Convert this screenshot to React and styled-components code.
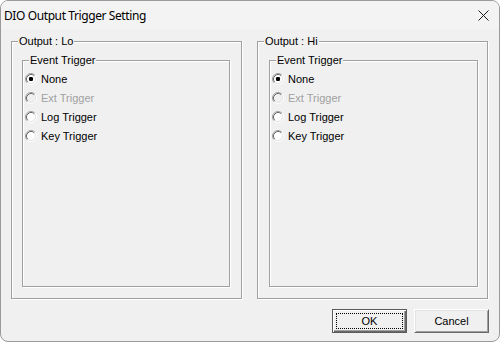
import React from "react";
import styled, { createGlobalStyle } from "styled-components";

const GlobalStyle = createGlobalStyle`
  html, body {
    margin: 0;
    padding: 0;
    background: #ffffff;
  }
  body {
    font-family: "Liberation Sans", Arial, sans-serif;
    font-size: 11px;
    color: #000;
  }
`;

const Window = styled.div`
  width: 500px;
  height: 342px;
  box-sizing: border-box;
  background: #f0f0f0;
  border: 1px solid #9a9a9a;
  border-radius: 8px;
  display: flex;
  flex-direction: column;
  overflow: hidden;
`;

const TitleBar = styled.div`
  height: 28px;
  display: flex;
  align-items: center;
  justify-content: space-between;
  padding: 0 10px 0 3px;
  background: #f3f3f3;
`;

const Title = styled.span`
  font-family: "Noto Sans", "Open Sans", sans-serif;
  font-size: 12px;
  color: #000;
  letter-spacing: -0.4px;
`;

const CloseButton = styled.span`
  width: 12px;
  height: 12px;
  display: flex;
  align-items: center;
  justify-content: center;
`;

const Body = styled.div`
  flex: 1;
  display: flex;
  flex-direction: column;
  padding: 12px 10px 0 10px;
`;

const Groups = styled.div`
  display: grid;
  grid-template-columns: 231px 231px;
  column-gap: 15px;
`;

const GroupBox = styled.div`
  box-sizing: border-box;
  height: ${(p) => (p.$height ? `${p.$height}px` : "auto")};
  flex: ${(p) => (p.$height ? "none" : "1")};
  border: 1px solid #a0a0a0;
  box-shadow: inset 1px 1px 0 #fff, 1px 1px 0 #fff;
  display: flex;
  flex-direction: column;
`;

const GroupTitle = styled.span`
  display: block;
  width: fit-content;
  margin: -7px 0 0 6px;
  padding: 0 1px;
  line-height: 13px;
  background: #f0f0f0;
  white-space: nowrap;
`;

const Inner = styled.div`
  flex: 1;
  display: flex;
  margin: 12px ${(p) => p.$right}px 11px ${(p) => p.$left}px;
`;

const RadioList = styled.div`
  display: flex;
  flex-direction: column;
  padding: 2px 0 0 2px;
`;

const RadioRow = styled.label`
  height: 19px;
  display: flex;
  align-items: center;
  gap: 4px;
  color: ${(p) => (p.$disabled ? "#a0a0a0" : "#000")};
  white-space: nowrap;
`;

const ButtonRow = styled.div`
  display: flex;
  justify-content: flex-end;
  gap: 7px;
  margin-top: 10px;
`;

const Button = styled.button`
  width: 75px;
  height: 24px;
  box-sizing: border-box;
  padding: 0;
  margin: 0;
  font-family: "Liberation Sans", Arial, sans-serif;
  font-size: 11px;
  color: #000;
  background: #f0f0f0;
  display: flex;
  align-items: center;
  justify-content: center;
  border: 1px solid;
  border-color: ${(p) => (p.$default ? "#5a5a5a" : "#ffffff #696969 #696969 #ffffff")};
  box-shadow: ${(p) =>
    p.$default
      ? "inset 1px 1px 0 #fff, inset -1px -1px 0 #696969, inset -2px -2px 0 #a0a0a0"
      : "inset 1px 1px 0 #e3e3e3, inset -1px -1px 0 #a0a0a0"};
`;

const FocusRect = styled.span`
  box-sizing: border-box;
  width: 67px;
  height: 16px;
  border: 1px dotted #000;
  display: flex;
  align-items: center;
  justify-content: center;
`;

function RadioIcon({ checked, disabled }) {
  return (
    <svg width="12" height="12" viewBox="0 0 12 12">
      <circle cx="6" cy="6" r="4" fill={disabled ? "#f0f0f0" : "#fff"} />
      <path d="M2.11 9.89 A5.5 5.5 0 0 1 9.89 2.11" fill="none" stroke="#a0a0a0" />
      <path d="M9.89 2.11 A5.5 5.5 0 0 1 2.11 9.89" fill="none" stroke="#ffffff" />
      <path d="M2.82 9.18 A4.5 4.5 0 0 1 9.18 2.82" fill="none" stroke="#696969" />
      <path d="M9.18 2.82 A4.5 4.5 0 0 1 2.82 9.18" fill="none" stroke="#e3e3e3" />
      {checked && <rect x="4" y="4" width="4" height="4" rx="1.2" fill="#000" />}
    </svg>
  );
}

const options = [
  { label: "None", checked: true },
  { label: "Ext Trigger", disabled: true },
  { label: "Log Trigger" },
  { label: "Key Trigger" },
];

function OutputGroup({ title, left, right }) {
  return (
    <GroupBox $height={258}>
      <GroupTitle>{title}</GroupTitle>
      <Inner $left={left} $right={right}>
        <GroupBox>
          <GroupTitle>Event Trigger</GroupTitle>
          <RadioList>
            {options.map((o) => (
              <RadioRow key={o.label} $disabled={o.disabled}>
                <RadioIcon checked={o.checked} disabled={o.disabled} />
                {o.label}
              </RadioRow>
            ))}
          </RadioList>
        </GroupBox>
      </Inner>
    </GroupBox>
  );
}

export default function App() {
  return (
    <>
      <GlobalStyle />
      <Window>
        <TitleBar>
          <Title>DIO Output Trigger Setting</Title>
          <CloseButton>
            <svg width="11" height="11" viewBox="0 0 11 11">
              <path d="M0.5 0.5 L10.5 10.5 M10.5 0.5 L0.5 10.5" stroke="#1a1a1a" strokeWidth="1" fill="none" />
            </svg>
          </CloseButton>
        </TitleBar>
        <Body>
          <Groups>
            <OutputGroup title="Output : Lo" left={10} right={11} />
            <OutputGroup title="Output : Hi" left={11} right={9} />
          </Groups>
          <ButtonRow>
            <Button $default>
              <FocusRect>OK</FocusRect>
            </Button>
            <Button>Cancel</Button>
          </ButtonRow>
        </Body>
      </Window>
    </>
  );
}
